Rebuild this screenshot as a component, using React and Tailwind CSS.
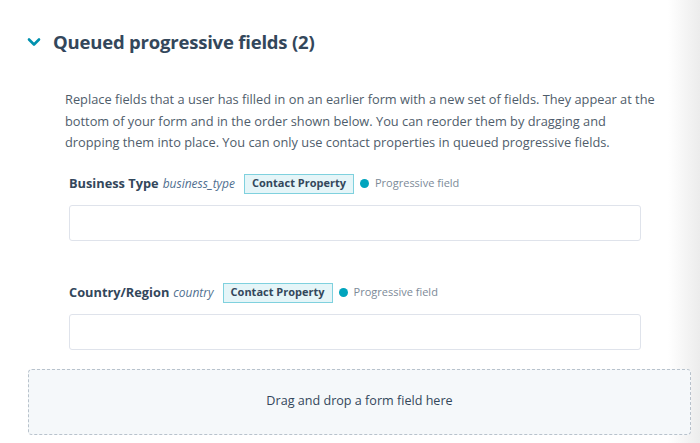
import React from 'react'

const FIELDS = [
  { label: 'Business Type', name: 'business_type' },
  { label: 'Country/Region', name: 'country' },
]

function FieldRow({ label, name }) {
  return (
    <div className="mb-[42px] last:mb-0">
      <div className="flex items-center h-[20px] mb-[11px]">
        <span className="text-[12.8px] font-bold text-[#33475b]">{label}</span>
        <span className="ml-[4px] text-[12px] italic text-[#516f90]">{name}</span>
        <span className="ml-[9px] h-[20px] px-[7px] flex items-center border border-[#7fd1de] bg-[#e5f5f8] text-[11px] font-bold text-[#33475b]">
          Contact Property
        </span>
        <span className="ml-[6px] w-[9px] h-[9px] rounded-full bg-[#00a4bd]" />
        <span className="ml-[6px] text-[11px] text-[#7c8a98]">Progressive field</span>
      </div>
      <div className="w-[572px] h-[36px] bg-white border border-[#dfe3eb] rounded-[3px]" />
    </div>
  )
}

export default function App() {
  return (
    <div className="relative w-[700px] h-[443px] bg-white overflow-hidden" style={{ fontFamily: '"Open Sans", "Noto Sans", sans-serif' }}>
      <div className="absolute top-0 right-0 w-[32px] h-full bg-gradient-to-r from-white to-[#ececec]" />
      <div className="relative pt-[29px]">
        <div className="flex items-center pl-[26px] h-[26px]">
          <svg width="16" height="16" viewBox="0 0 16 16" className="text-[#0091ae]">
            <path d="M3 5.5 L8 10.5 L13 5.5" fill="none" stroke="currentColor" strokeWidth="2.6" strokeLinecap="round" strokeLinejoin="round" />
          </svg>
          <h2 className="ml-[11px] text-[18.5px] font-bold text-[#33475b] tracking-[-0.2px]">Queued progressive fields (2)</h2>
        </div>

        <p className="mt-[34px] ml-[65px] w-[594px] text-[12.8px] leading-[21.5px] text-[#4f5d6b]">
          Replace fields that a user has filled in on an earlier form with a new set of fields. They appear at the bottom of your form and in the order shown below. You can reorder them by dragging and dropping them into place. You can only use contact properties in queued progressive fields.
        </p>

        <div className="mt-[20px] ml-[69px]">
          {FIELDS.map(f => <FieldRow key={f.name} {...f} />)}
        </div>

        <div className="mt-[19px] ml-[28px] w-[663px] h-[66px] flex items-center justify-center border border-dashed border-[#b8c2cc] rounded-[4px] bg-[#f5f8fa]">
          <span className="text-[12.6px] text-[#33475b]">Drag and drop a form field here</span>
        </div>
      </div>
    </div>
  )
}
